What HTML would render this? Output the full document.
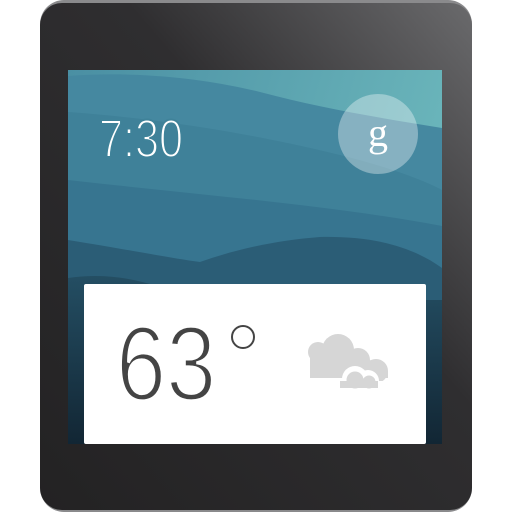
<!DOCTYPE html>
<html><head><style>
html,body{margin:0;padding:0;background:#fff;width:512px;height:512px;overflow:hidden}
.t{font-family:"Liberation Sans",sans-serif}
</style></head><body>
<svg width="512" height="512" viewBox="0 0 512 512" xmlns="http://www.w3.org/2000/svg">
<defs>
<linearGradient id="b" x1="0" y1="1" x2="1" y2="0">
<stop offset="0" stop-color="#232223"/><stop offset="0.6" stop-color="#2f2e30"/><stop offset="1" stop-color="#6a6a6c"/>
</linearGradient>
<linearGradient id="sk" x1="0" y1="0" x2="1" y2="0.3">
<stop offset="0" stop-color="#4a8fa3"/><stop offset="1" stop-color="#6bb6bb"/>
</linearGradient>
<linearGradient id="lo" x1="0" y1="0" x2="0" y2="1">
<stop offset="0" stop-color="#244e63"/><stop offset="1" stop-color="#122634"/>
</linearGradient>
<clipPath id="sc"><rect x="68" y="70" width="374" height="374"/></clipPath>
</defs>
<rect x="40" y="0" width="432" height="512" rx="24" fill="#8a8a8c"/>
<rect x="40" y="3" width="432" height="507" rx="22" fill="url(#b)"/>
<g clip-path="url(#sc)">
<rect x="68" y="70" width="374" height="374" fill="url(#sk)"/>
<path d="M68 76 C150 70 220 82 260 92 C320 108 380 118 442 128 L442 444 L68 444Z" fill="#4588a0"/>
<path d="M68 112 C180 120 280 140 340 155 C380 165 420 178 442 190 L442 444 L68 444Z" fill="#3f8199"/>
<path d="M68 180 C200 195 330 205 442 226 L442 444 L68 444Z" fill="#377590"/>
<path d="M68 240 C130 250 170 258 200 262 C240 248 280 240 320 237 C370 236 410 245 442 268 L442 444 L68 444Z" fill="#2b5d76"/>
<path d="M68 278 C110 272 150 280 190 300 L442 300 L442 444 L68 444Z" fill="url(#lo)"/>
</g>
<rect x="84" y="284" width="342" height="160" rx="2" fill="#fff"/>
<text transform="translate(99 157) scale(0.8 1)" class="t" font-size="54" fill="#fff" stroke="#3f8299" stroke-width="2" paint-order="fill">7:30</text>
<circle cx="378" cy="134" r="40" fill="#fff" fill-opacity="0.35"/>
<text x="378" y="146" font-family="Liberation Serif,serif" font-size="40" fill="#fff" text-anchor="middle">g</text>
<text transform="translate(116 400) scale(0.85 1)" class="t" font-size="106" fill="#444" stroke="#fff" stroke-width="3.2" paint-order="fill">63</text>
<circle cx="243" cy="337" r="11" fill="none" stroke="#444" stroke-width="2"/>
<g fill="#d6d6d6">
<circle cx="318" cy="352" r="10"/>
<circle cx="338" cy="350" r="16"/>
<circle cx="358" cy="360" r="12"/>
<circle cx="376" cy="371" r="12"/>
<path d="M310 352 L310 378 L388 378 L388 371 L370 360 L330 345Z"/>
</g>
<g fill="#fff">
<circle cx="355" cy="379" r="13"/><circle cx="368" cy="381" r="11"/><rect x="335" y="381" width="53" height="12"/>
</g>
<g fill="#d6d6d6">
<circle cx="355" cy="380" r="8.5"/><circle cx="369" cy="382" r="6.5"/><rect x="340" y="381" width="38" height="7"/>
</g>
</svg>
</body></html>
